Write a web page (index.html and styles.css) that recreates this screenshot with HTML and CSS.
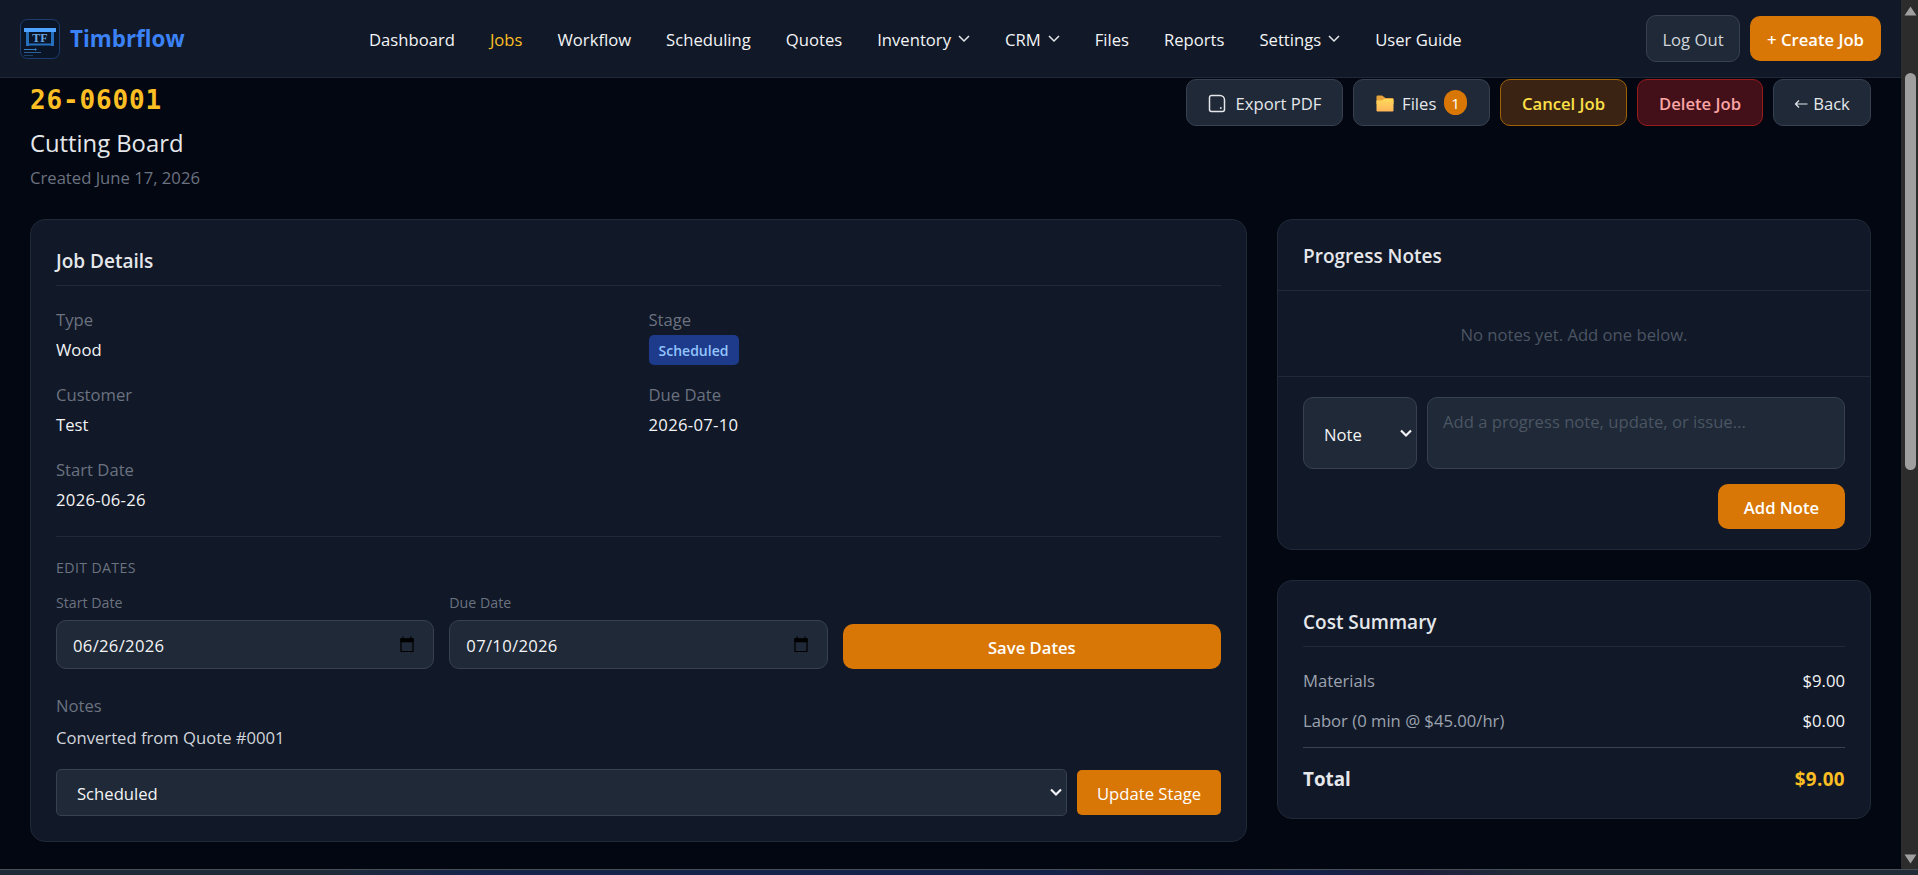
FILE: index.html
```html
<!DOCTYPE html>
<html lang="en">
<head>
    <meta charset="UTF-8">
    <meta name="viewport" content="width=device-width, initial-scale=1.0">
    <title>Timbrflow - Job 26-06001</title>
    <link rel="stylesheet" href="styles.css">
</head>
<body>
    <div class="window">
        <div class="page">
            <header class="topbar">
                <a class="brand">
                    <svg class="logo" viewBox="0 0 40 40">
                        <rect x="0.5" y="0.5" width="39" height="39" rx="7" fill="#0a1628" stroke="#1c3d6e"/>
                        <rect x="6" y="12" width="3" height="15" fill="#2470bd"/>
                        <rect x="31" y="12" width="3" height="15" fill="#2470bd"/>
                        <rect x="6" y="24.5" width="28" height="2" fill="#2470bd"/>
                        <rect x="4" y="9" width="32" height="4" fill="#4da3ff"/>
                        <text x="20" y="23" text-anchor="middle" class="logo-text">TF</text>
                        <path d="M4 30.5h12" stroke="#3b7fc4" stroke-width="1"/>
                        <path d="M15 29l2 1.500-2 1.500z" fill="#3b7fc4"/>
                        <path d="M4 33.500h17" stroke="#2b5f96" stroke-width="1"/>
                        <path d="M4 36.500h9" stroke="#1f4269" stroke-width="1"/>
                    </svg>
                    <span class="brand-name">Timbrflow</span>
                </a>
                <nav class="nav">
                    <a>Dashboard</a>
                    <a class="active">Jobs</a>
                    <a>Workflow</a>
                    <a>Scheduling</a>
                    <a>Quotes</a>
                    <a>Inventory <svg class="chevron" viewBox="0 0 12 8"><path d="M1 1l5 5 5-5"/></svg></a>
                    <a>CRM <svg class="chevron" viewBox="0 0 12 8"><path d="M1 1l5 5 5-5"/></svg></a>
                    <a>Files</a>
                    <a>Reports</a>
                    <a>Settings <svg class="chevron" viewBox="0 0 12 8"><path d="M1 1l5 5 5-5"/></svg></a>
                    <a>User Guide</a>
                </nav>
                <div class="account">
                    <button class="btn btn-dark btn-logout">Log Out</button>
                    <button class="btn btn-primary btn-create">+ Create Job</button>
                </div>
            </header>

            <main class="content">
                <div class="job-header">
                    <div>
                        <h1 class="job-number">26-06001</h1>
                        <p class="job-name">Cutting Board</p>
                        <p class="job-created">Created June 17, 2026</p>
                    </div>
                    <div class="job-actions">
                        <button class="btn btn-dark btn-export">
                            <svg class="icon-doc" viewBox="0 0 18 20"><path d="M3.500 1.500h8.500c2.500 0 4.500 2 4.500 4.500v9.500a2 2 0 0 1-2 2h-11a2 2 0 0 1-2-2v-12a2 2 0 0 1 2-2z"/><circle cx="12.800" cy="14" r="0.900"/></svg>
                            Export PDF
                        </button>
                        <button class="btn btn-dark btn-files">
                            <svg class="icon-folder" viewBox="0 0 18 17">
                                <defs>
                                    <linearGradient id="folder" x1="0" y1="0" x2="0" y2="1">
                                        <stop offset="0" stop-color="#ffd95c"/>
                                        <stop offset="1" stop-color="#ffb55a"/>
                                    </linearGradient>
                                </defs>
                                <path d="M0.500 1.500a1 1 0 0 1 1-1h4.500l3.500 2.500h7a1 1 0 0 1 1 1v5h-17z" fill="#e8a33a"/>
                                <path d="M0.500 5.500h5.500l2-1.500h8.500a1 1 0 0 1 1 1v10.500a1 1 0 0 1-1 1h-15a1 1 0 0 1-1-1z" fill="url(#folder)"/>
                            </svg>
                            Files
                            <span class="count">1</span>
                        </button>
                        <button class="btn btn-warning">Cancel Job</button>
                        <button class="btn btn-danger">Delete Job</button>
                        <button class="btn btn-dark btn-back"><svg class="icon-back" viewBox="0 0 14 10"><path d="M13.500 5h-12M5 1.500l-3.500 3.500 3.500 3.500"/></svg>Back</button>
                    </div>
                </div>

                <div class="columns">
                    <section class="card details">
                        <h2 class="card-title underlined">Job Details</h2>
                        <div class="fields">
                            <div>
                                <div class="label">Type</div>
                                <div class="value">Wood</div>
                            </div>
                            <div>
                                <div class="label">Stage</div>
                                <span class="stage">Scheduled</span>
                            </div>
                            <div>
                                <div class="label">Customer</div>
                                <div class="value">Test</div>
                            </div>
                            <div>
                                <div class="label">Due Date</div>
                                <div class="value digits">2026-07-10</div>
                            </div>
                            <div>
                                <div class="label">Start Date</div>
                                <div class="value digits">2026-06-26</div>
                            </div>
                        </div>

                        <div class="edit-dates">
                            <div class="edit-title">EDIT DATES</div>
                            <div class="date-row">
                                <div>
                                    <div class="small-label">Start Date</div>
                                    <div class="input">
                                        06/26/2026
                                        <svg class="calendar" viewBox="0 0 16 18"><path d="M2 3h12v12.500h-12z"/><path class="solid" d="M1.300 2.300h13.400v4h-13.400z"/><path d="M4 0.500v2M12 0.500v2"/></svg>
                                    </div>
                                </div>
                                <div>
                                    <div class="small-label">Due Date</div>
                                    <div class="input">
                                        07/10/2026
                                        <svg class="calendar" viewBox="0 0 16 18"><path d="M2 3h12v12.500h-12z"/><path class="solid" d="M1.300 2.300h13.400v4h-13.400z"/><path d="M4 0.500v2M12 0.500v2"/></svg>
                                    </div>
                                </div>
                                <button class="btn btn-primary">Save Dates</button>
                            </div>
                        </div>

                        <div class="notes">
                            <div class="label">Notes</div>
                            <div class="notes-text">Converted from Quote #0001</div>
                        </div>

                        <div class="stage-form">
                            <div class="select">
                                Scheduled
                                <svg class="caret" viewBox="0 0 12 9"><path d="M1 1.500l5 5 5-5"/></svg>
                            </div>
                            <button class="btn btn-primary btn-update">Update Stage</button>
                        </div>
                    </section>

                    <aside class="side">
                        <section class="card progress">
                            <h2 class="card-title progress-title">Progress Notes</h2>
                            <p class="empty">No notes yet. Add one below.</p>
                            <div class="note-form">
                                <div class="note-inputs">
                                    <div class="select note-type">
                                        Note
                                        <svg class="caret" viewBox="0 0 12 9"><path d="M1 1.500l5 5 5-5"/></svg>
                                    </div>
                                    <div class="textarea">Add a progress note, update, or issue...</div>
                                </div>
                                <button class="btn btn-primary btn-note">Add Note</button>
                            </div>
                        </section>

                        <section class="card">
                            <h2 class="card-title underlined">Cost Summary</h2>
                            <div class="costs">
                                <div class="cost-row"><span>Materials</span><span class="amount">$9.00</span></div>
                                <div class="cost-row"><span>Labor (0 min @ $45.00/hr)</span><span class="amount">$0.00</span></div>
                                <div class="total-row"><span>Total</span><span class="total">$9.00</span></div>
                            </div>
                        </section>
                    </aside>
                </div>
            </main>
        </div>

        <div class="scrollbar">
            <svg class="arrow" viewBox="0 0 13 10"><path d="M6.500 0.500L12.500 9.500H0.500z"/></svg>
            <div class="thumb"></div>
            <svg class="arrow" viewBox="0 0 13 10"><path d="M6.500 9.500L12.500 0.500H0.500z"/></svg>
        </div>
    </div>
    <div class="taskbar"></div>
</body>
</html>
```

FILE: styles.css
```css
* {
    margin: 0;
    padding: 0;
    box-sizing: border-box;
}

body {
    width: 1918px;
    height: 875px;
    overflow: hidden;
    background: #030712;
    color: #f3f4f6;
    font-family: 'Open Sans', 'Noto Sans', sans-serif;
    font-size: 16.65px;
    line-height: 25px;
}

.window {
    display: flex;
    height: 869px;
}

.page {
    width: 1901px;
}

/* Top bar */
.topbar {
    display: flex;
    align-items: center;
    height: 78px;
    padding: 0 20px;
    background: #111827;
    border-bottom: 1px solid #1f2937;
}

.brand {
    display: flex;
    align-items: center;
    gap: 10px;
    width: 349px;
}

.logo {
    width: 40px;
    height: 40px;
}

.logo-text {
    font-family: 'Liberation Serif', serif;
    font-size: 12px;
    font-weight: bold;
    fill: #6ba6e0;
}

.brand-name {
    color: #3b82f6;
    font-size: 22.4px;
    font-weight: 700;
}

.nav {
    display: flex;
    gap: 35px;
    padding-top: 2px;
}

.nav a {
    display: flex;
    align-items: center;
    gap: 7px;
    white-space: nowrap;
}

.nav .active {
    color: #fbbf24;
}

.chevron {
    width: 12px;
    height: 8px;
    margin-top: -2px;
    fill: none;
    stroke: #e5e7eb;
    stroke-width: 1.5;
}

.account {
    display: flex;
    align-items: center;
    gap: 10px;
    margin-left: auto;
}

/* Buttons */
.btn {
    display: flex;
    align-items: center;
    justify-content: center;
    height: 47px;
    padding-top: 2px;
    border: 1px solid transparent;
    border-radius: 10px;
    font-family: inherit;
    font-size: 16.65px;
    line-height: 25px;
    white-space: nowrap;
}

.btn-dark {
    background: #1f2937;
    border-color: #374151;
    color: #e5e7eb;
}

.btn-primary {
    height: 45px;
    background: #d97706;
    border: none;
    color: #fff;
    font-weight: 600;
}

.btn-logout {
    width: 94px;
    color: #d1d5db;
}

.btn-create {
    width: 131px;
}

.btn-export {
    width: 157px;
    gap: 10px;
}

.btn-files {
    width: 137px;
    gap: 8px;
}

.btn-warning {
    width: 127px;
    background: #3b2314;
    border-color: #a16207;
    color: #fde047;
    font-weight: 600;
}

.btn-danger {
    width: 126px;
    background: #430f18;
    border-color: #991b1b;
    color: #fca5a5;
    font-weight: 600;
}

.btn-back {
    width: 98px;
    gap: 5px;
}

.btn-update {
    width: 144px;
    border-radius: 5px;
    font-weight: 400;
}

.btn-note {
    width: 127px;
    margin: 15px 0 0 auto;
}

.icon-doc {
    width: 18px;
    height: 20px;
    fill: none;
    stroke: #e5e7eb;
    stroke-width: 1.5;
}

.icon-doc circle {
    fill: #e5e7eb;
    stroke: none;
}

.icon-folder {
    width: 18px;
    height: 17px;
}

.icon-back {
    width: 14px;
    height: 10px;
    fill: none;
    stroke: #e5e7eb;
    stroke-width: 1.2;
}

.count {
    height: 25px;
    margin-top: -3px;
    padding: 0 7px;
    border-radius: 13px;
    background: #d97706;
    color: #fff;
    font-size: 15px;
    line-height: 26px;
}

/* Job header */
.content {
    padding: 1px 30px 0;
}

.job-header {
    display: flex;
    justify-content: space-between;
    height: 140px;
}

.job-number {
    height: 41px;
    color: #fbbf24;
    font-family: 'DejaVu Sans Mono', monospace;
    font-size: 26px;
    font-weight: 700;
    letter-spacing: 0.85px;
    line-height: 43px;
}

.job-name {
    color: #e5e7eb;
    font-size: 23.8px;
    line-height: 46px;
}

.job-created {
    color: #6b7280;
    line-height: 24px;
}

.job-actions {
    display: flex;
    gap: 10px;
}

/* Cards */
.columns {
    display: grid;
    grid-template-columns: 1217px 594px;
    gap: 30px;
    align-items: start;
}

.card {
    padding: 25px;
    background: #111827;
    border: 1px solid #1f2937;
    border-radius: 15px;
}

.card-title {
    color: #e5e7eb;
    font-size: 19px;
    font-weight: 600;
    line-height: 32px;
}

.underlined {
    padding-bottom: 8px;
    border-bottom: 1px solid #1f2937;
}

.details {
    height: 623px;
}

.fields {
    display: grid;
    grid-template-columns: 1fr 1fr;
    gap: 20px;
    padding: 21px 0 24px;
}

.label {
    color: #6b7280;
}

.value {
    margin-top: 5px;
}

.digits,
.input {
    letter-spacing: 0.3px;
}

.stage {
    display: block;
    width: 90px;
    height: 30px;
    margin: 3px 0 -3px;
    border-radius: 5px;
    background: #1e3a8a;
    color: #93c5fd;
    font-size: 14px;
    font-weight: 600;
    line-height: 31px;
    text-align: center;
}

.edit-dates {
    padding-top: 21px;
    border-top: 1px solid #1f2937;
}

.edit-title,
.small-label {
    color: #6b7280;
    font-size: 14.2px;
    line-height: 20px;
}

.edit-title {
    letter-spacing: 0.35px;
}

.small-label {
    margin-bottom: 7px;
}

.date-row {
    display: grid;
    grid-template-columns: repeat(3, 1fr);
    gap: 15px;
    align-items: end;
    margin-top: 15px;
}

.input,
.select,
.textarea {
    display: flex;
    align-items: center;
    justify-content: space-between;
    background: #1f2937;
    border: 1px solid #374151;
    border-radius: 10px;
}

.input {
    height: 49px;
    padding: 2px 18px 0 16px;
}

.calendar {
    width: 16px;
    height: 18px;
    margin-top: -2px;
    fill: none;
    stroke: #000;
    stroke-width: 1.2;
}

.calendar .solid {
    fill: #000;
    stroke: none;
}

.notes {
    margin-top: 24px;
}

.notes-text {
    margin-top: 7px;
    color: #d1d5db;
}

.stage-form {
    display: flex;
    align-items: center;
    gap: 10px;
    margin-top: 19px;
}

.select {
    flex: 1;
    height: 47px;
    padding: 2px 4px 0 20px;
    border-radius: 5px;
}

.caret {
    width: 12px;
    height: 9px;
    margin-top: -2px;
    fill: none;
    stroke: #f3f4f6;
    stroke-width: 2.2;
}

/* Right column */
.side {
    display: flex;
    flex-direction: column;
    gap: 30px;
}

.progress {
    padding: 0;
}

.progress-title {
    padding: 20px 25px 18px;
    border-bottom: 1px solid #1f2937;
}

.empty {
    padding: 31px 0 29px;
    color: #4b5563;
    text-align: center;
}

.note-form {
    padding: 20px 25px;
    border-top: 1px solid #1f2937;
}

.note-inputs {
    display: flex;
    gap: 10px;
}

.note-type {
    flex: none;
    width: 114px;
    height: 72px;
    border-radius: 10px;
}

.textarea {
    flex: 1;
    align-items: flex-start;
    padding: 11px 15px;
    color: #4b5563;
}

.costs {
    padding-top: 21px;
}

.cost-row {
    display: flex;
    justify-content: space-between;
    margin-bottom: 15px;
    color: #9ca3af;
}

.amount {
    color: #f3f4f6;
}

.total-row {
    display: flex;
    justify-content: space-between;
    margin-top: -1px;
    padding-top: 15px;
    border-top: 1px solid #374151;
    color: #e5e7eb;
    font-size: 18.8px;
    font-weight: 700;
    line-height: 32px;
    height: 46px;
}

.total {
    color: #fbbf24;
    letter-spacing: 0.4px;
}

/* Window scrollbar and the strip below it */
.scrollbar {
    display: flex;
    flex-direction: column;
    align-items: center;
    width: 17px;
    padding: 6px 0 5px 2px;
    background: #2c2c2c;
}

.arrow {
    width: 13px;
    height: 10px;
    fill: #9f9f9f;
}

.thumb {
    width: 11px;
    height: 397px;
    margin: 57px 0 auto;
    border-radius: 6px;
    background: #9f9f9f;
}

.taskbar {
    height: 6px;
    border-top: 1px solid #4a4f55;
    background: linear-gradient(90deg, #1f2a38 0%, #1f2a38 17%, #16244a 24%, #14224a 55%, #1e1e3c 60%, #14224a 68%, #1e1e3c 74%, #222c38 80%, #222c38 100%);
}
```
